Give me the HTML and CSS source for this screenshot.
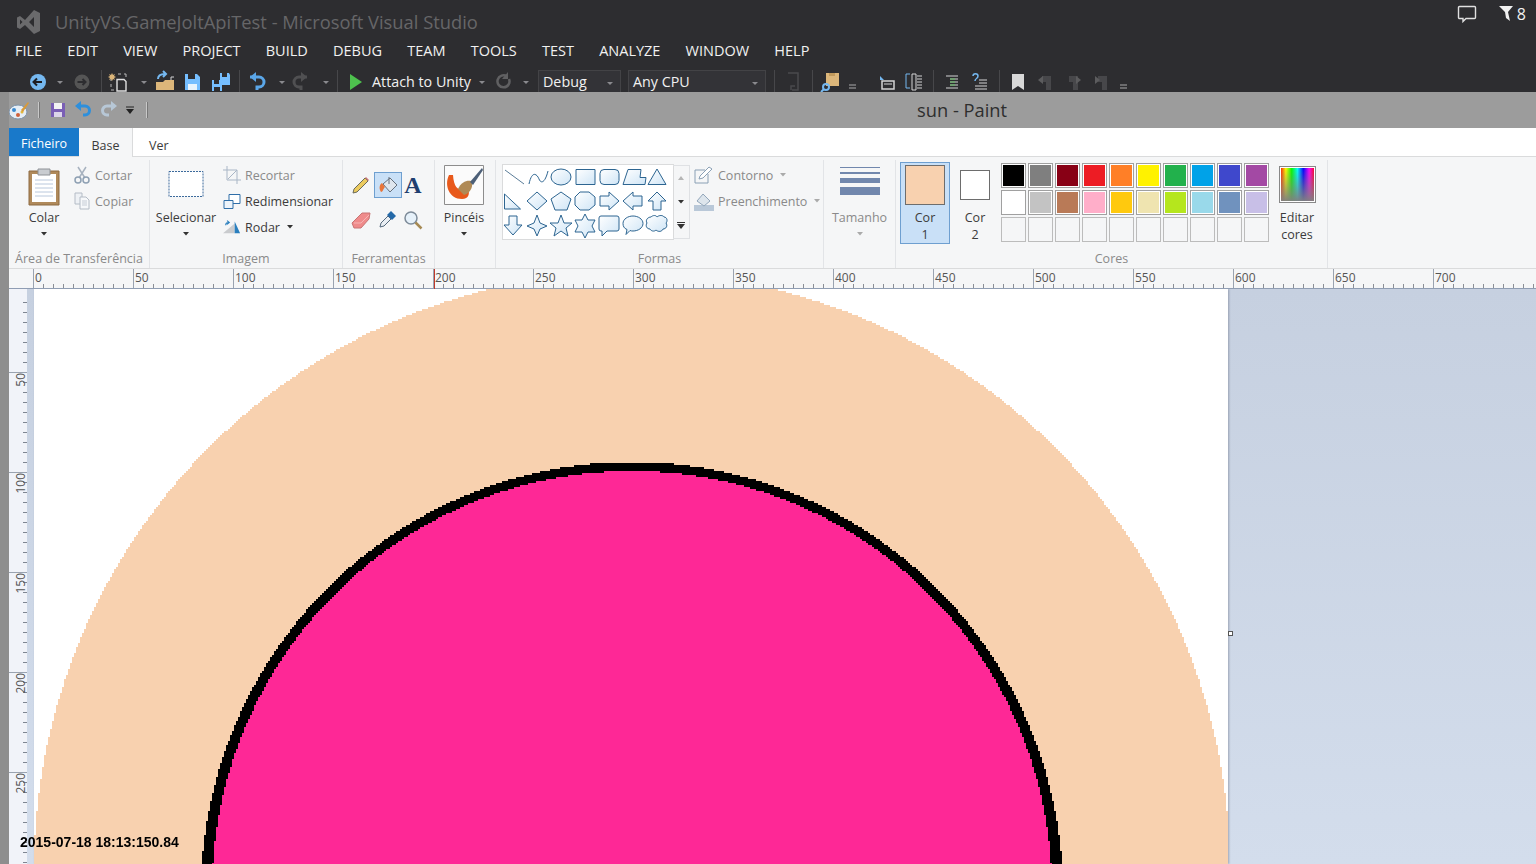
FILE: index.html
```html
<!DOCTYPE html>
<html lang="pt">
<head>
<meta charset="utf-8">
<title>sun - Paint</title>
<link rel="stylesheet" href="styles.css">
</head>
<body>
<svg class="defs" width="0" height="0">
  <symbol id="dn" viewBox="0 0 16 22"><path d="M5 11h6l-3 3z" fill="#8a8a8e"/></symbol>
  <symbol id="dk" viewBox="0 0 8 6"><path d="M1 1h6L4 4.500z" fill="#333"/></symbol>
  <symbol id="lt" viewBox="0 0 8 6"><path d="M1 1h6L4 4.500z" fill="#aaa"/></symbol>
</svg>

<header class="vs">
  <div class="vs-title">
    <svg class="vs-logo" width="26" height="26" viewBox="0 0 26 26"><path d="M19 1l6 3v18l-6 3-9-9-5 4-3-1.500V8.500L5 7l5 4zM5 10.500v5l2.500-2.500zM19 8l-5 5 5 5z" fill="#6a6a6c"/></svg>
    <span class="vs-name">UnityVS.GameJoltApiTest - Microsoft Visual Studio</span>
    <div class="vs-notify">
      <svg width="20" height="18" viewBox="0 0 20 18"><path d="M2.500 1.500h15a1 1 0 0 1 1 1v10a1 1 0 0 1-1 1H9l-3 3v-3H2.500a1 1 0 0 1-1-1v-10a1 1 0 0 1 1-1z" fill="none" stroke="#e0e0e0" stroke-width="1.400"/></svg>
      <svg class="funnel" width="15" height="17" viewBox="0 0 15 17"><path d="M0 1h14L9 7l2 9-4-3-1-6z" fill="#f1f1f1"/></svg>
      <span>8</span>
    </div>
  </div>
  <nav class="vs-menu">
    <span>FILE</span><span>EDIT</span><span>VIEW</span><span>PROJECT</span><span>BUILD</span><span>DEBUG</span><span>TEAM</span><span>TOOLS</span><span>TEST</span><span>ANALYZE</span><span>WINDOW</span><span>HELP</span>
  </nav>
  <div class="vs-tools">
    <svg width="28" height="22" viewBox="0 0 28 22"><circle cx="14" cy="12" r="8" fill="#75b8f0"/><path d="M18 12h-8m3-3.500L9.500 12l3.500 3.500" stroke="#1e1e22" stroke-width="2" fill="none"/></svg>
    <svg width="16" height="22"><use href="#dn"/></svg>
    <svg width="28" height="22" viewBox="0 0 28 22"><circle cx="14" cy="12" r="7.500" fill="#555"/><path d="M9.500 12h8m-3-3 3 3-3 3" stroke="#2d2d30" stroke-width="2" fill="none"/></svg>
    <i class="sep"></i>
    <svg width="26" height="22" viewBox="0 0 26 22"><path d="M6 8h-1v3M5 14v3M5 20h3M12 4h3M18 4h2v3" fill="none" stroke="#b8b8b8"/><path d="M11 9.500h7l2 2V21h-9z" fill="#2d2d30" stroke="#e0e0e0" stroke-width="1.400"/><path d="M6 3l1 2 2-1-1 2 2 1-2 1 1 2-2-1-1 2-1-2-2 1 1-2-2-1 2-1-1-2 2 1z" fill="#dcb67a"/></svg>
    <svg width="20" height="22"><use href="#dn" x="2"/></svg>
    <svg width="26" height="22" viewBox="0 0 26 22"><path d="M4 12h7l2-2h9v10H4z" fill="#dcb67a"/><path d="M19 10V7h3" fill="none" stroke="#d4d4d4"/><path d="M6 9c0-4 3-5 7-5m-2-3 3 3-3 3" stroke="#75b8f0" stroke-width="2" fill="none"/></svg>
    <svg width="28" height="22" viewBox="0 0 28 22"><path d="M7 4h12l3 3v13H7z" fill="#75beff"/><path d="M10 4h7v5h-7z" fill="#2d2d30"/><path d="M10 14h9v6h-9z" fill="#e8f3fc"/></svg>
    <svg width="28" height="22" viewBox="0 0 28 22"><path d="M14 3h9l1 2v10h-10z" fill="#75beff"/><path d="M16 3h5v4h-5z" fill="#2d2d30"/><path d="M6 10h9l1 2v9H6z" fill="#75beff"/><path d="M8 10h5v4H8zM8 17h6v4H8z" fill="#2d2d30"/></svg>
    <i class="sep"></i>
    <svg width="26" height="22" viewBox="0 0 26 22"><path d="M6 7h9a5 5 0 0 1 0 10h-2v3" fill="none" stroke="#5aa6e8" stroke-width="3"/><path d="M12 2v10L6 7z" fill="#5aa6e8"/></svg>
    <svg width="20" height="22"><use href="#dn" x="2"/></svg>
    <svg width="22" height="22" viewBox="0 0 22 22"><path d="M17 7H9a5 5 0 0 0 0 10h2v3" fill="none" stroke="#505052" stroke-width="3"/><path d="M11 2v10l6-5z" fill="#505052"/></svg>
    <svg width="20" height="22"><use href="#dn" x="4"/></svg>
    <i class="sep"></i>
    <svg width="26" height="22" viewBox="0 0 26 22"><path d="M8 4l12 8-12 8z" fill="#4ec24e"/></svg>
    <span class="attach">Attach to Unity</span>
    <svg width="16" height="22"><use href="#dn"/></svg>
    <svg width="28" height="22" viewBox="0 0 28 22"><path d="M19 9a6 6 0 1 1-2-2.500" fill="none" stroke="#606062" stroke-width="2.500"/><path d="M18 2v7h-6z" fill="#606062"/></svg>
    <svg width="16" height="22"><use href="#dn"/></svg>
    <div class="combo combo-debug">Debug<svg width="16" height="22"><use href="#dn"/></svg></div>
    <div class="combo combo-cpu">Any CPU<svg width="16" height="22"><use href="#dn"/></svg></div>
    <i class="sep sep-cpu"></i>
    <svg width="28" height="22" viewBox="0 0 28 22"><path d="M9 3h10v17h-6M12 20v-4h4" fill="none" stroke="#4a4a4c" stroke-width="1.500"/></svg>
    <i class="sep sep-mid"></i>
    <svg width="28" height="22" viewBox="0 0 28 22"><path d="M9 3h13v13H9z" fill="#dcb67a"/><path d="M12 3h6v3h-6z" fill="#c29a5c"/><circle cx="9" cy="17" r="3" fill="none" stroke="#75b8f0" stroke-width="2"/><path d="M7 19l-3 3" stroke="#75b8f0" stroke-width="2"/></svg>
    <svg class="more-gap" width="16" height="22" viewBox="0 0 16 22"><path d="M4 15h7M4 18h7" stroke="#aaa"/></svg>
    <svg width="28" height="22" viewBox="0 0 28 22"><path d="M8 6l4 4H8z" fill="#75b8f0"/><path d="M10 11h12v8H10z" fill="none" stroke="#d4d4d4" stroke-width="1.500"/><path d="M12 14h8" stroke="#d4d4d4"/></svg>
    <svg width="28" height="22" viewBox="0 0 28 22"><path d="M10 4H6v14h4" fill="none" stroke="#75b8f0"/><path d="M12 4h4v16h-4zM17 6h5m-5 3h5m-5 3h5m-5 3h5m-5 3h5" fill="none" stroke="#d4d4d4"/></svg>
    <i class="sep"></i>
    <svg width="28" height="22" viewBox="0 0 28 22"><path d="M8 6h12M12 9h8M12 12h8M12 15h8M8 18h12" stroke="#d4d4d4"/><path d="M12 9h5M12 12h5M12 15h5" stroke="#5cb85c"/></svg>
    <svg width="28" height="22" viewBox="0 0 28 22"><path d="M13 10h8M13 13h8M9 16h12M9 19h12" stroke="#d4d4d4"/><path d="M7 6c0-3 5-3 5 0s-3 2-3 5" fill="none" stroke="#75b8f0" stroke-width="1.500"/></svg>
    <i class="sep"></i>
    <svg width="28" height="22" viewBox="0 0 28 22"><path d="M8 4h12v16l-6-4-6 4z" fill="#d8d8d8"/></svg>
    <svg width="28" height="22" viewBox="0 0 28 22"><path d="M10 6h9v14h-5V12l-4 0z" fill="#47474a"/><path d="M6 10l5-4v8z" fill="#5c5c5e"/></svg>
    <svg width="28" height="22" viewBox="0 0 28 22"><path d="M9 6h9v14h-5V12H9z" fill="#47474a"/><path d="M21 10l-5-4v8z" fill="#5c5c5e"/></svg>
    <svg width="28" height="22" viewBox="0 0 28 22"><path d="M10 6h9v14h-5V12h-4z" fill="#47474a"/><path d="M7 6l5 4-5 4z" fill="#5c5c5e"/></svg>
    <svg width="16" height="22" viewBox="0 0 16 22"><path d="M4 15h7M4 18h7" stroke="#aaa"/></svg>
  </div>
</header>

<main class="paint">
  <div class="qat">
    <svg width="22" height="22" viewBox="0 0 22 22"><ellipse cx="10" cy="13" rx="9" ry="7" fill="#e5edf5" stroke="#7d93aa"/><circle cx="6" cy="11" r="2" fill="#3a8ad0"/><circle cx="10" cy="16" r="2" fill="#d0603a"/><circle cx="14" cy="13" r="1.500" fill="#e3b93c"/><path d="M13 11l7-8 1 1-6 9z" fill="#d89a3a"/></svg>
    <i class="qat-sep"></i>
    <svg class="qat-save" width="18" height="18" viewBox="0 0 18 18"><path d="M2 2h14v14H2z" fill="#7a5fb5"/><path d="M5 2h8v6H5z" fill="#f3f3f3"/><path d="M5 11h8v5H5z" fill="#dcd6ea"/></svg>
    <svg class="qat-undo" width="20" height="18" viewBox="0 0 20 18"><path d="M4 5h8a4.500 4.500 0 0 1 0 9h-2" fill="none" stroke="#2d8fdc" stroke-width="3"/><path d="M8 0v10L2 5z" fill="#2d8fdc"/></svg>
    <svg class="qat-redo" width="20" height="18" viewBox="0 0 20 18"><path d="M16 5H8a4.500 4.500 0 0 0 0 9h2" fill="none" stroke="#b7c7d6" stroke-width="3"/><path d="M12 0v10l6-5z" fill="#b7c7d6"/></svg>
    <svg class="qat-more" width="8" height="9" viewBox="0 0 8 9"><path d="M0 1h8" stroke="#222"/><path d="M0 3h8L4 8z" fill="#222"/></svg>
    <i class="qat-sep qat-sep-end"></i>
    <span class="doc-title">sun - Paint</span>
  </div>

  <div class="tabs">
    <span class="tab tab-file">Ficheiro</span>
    <span class="tab tab-on">Base</span>
    <span class="tab">Ver</span>
  </div>

  <div class="ribbon">
    <section class="group g-clip">
      <div class="g-body">
        <div class="big big-colar">
          <svg width="34" height="40" viewBox="0 0 34 40"><path d="M2 5h30v34H2z" fill="#b08a5b" stroke="#8d6b42"/><path d="M5 8h24v28H5z" fill="#fff"/><path d="M8 14h18M8 18h18M8 22h18M8 26h18M8 30h18" stroke="#b9c8dc"/><path d="M11 3h12v6H11z" fill="#c9ccd0" stroke="#8e9297"/></svg>
          <span>Colar</span>
          <svg class="caret" width="8" height="6"><use href="#dk"/></svg>
        </div>
        <div class="rows rows-clip">
          <div class="row off">
            <svg width="16" height="18" viewBox="0 0 16 18"><path d="M4 1l7 11M12 1L5 12" stroke="#a7b2bf" stroke-width="1.500"/><circle cx="4" cy="14" r="3" fill="none" stroke="#8ea0b3" stroke-width="1.500"/><circle cx="12" cy="14" r="3" fill="none" stroke="#8ea0b3" stroke-width="1.500"/></svg>
            <span>Cortar</span>
          </div>
          <div class="row off">
            <svg width="16" height="18" viewBox="0 0 16 18"><path d="M1 1h7v11H1z" fill="#eef1f5" stroke="#b4bcc6"/><path d="M6 5h6l3 3v9H6z" fill="#f6f8fa" stroke="#b4bcc6"/><path d="M8 9h5M8 11h5M8 13h5" stroke="#c6cdd6"/></svg>
            <span>Copiar</span>
          </div>
        </div>
      </div>
      <div class="g-label">Área de Transferência</div>
    </section>

    <section class="group g-image">
      <div class="g-body">
        <div class="big big-sel">
          <svg width="36" height="28" viewBox="0 0 36 28"><path d="M1 1.500h34v25H1z" fill="#fff" stroke="#3c6a9c" stroke-dasharray="2 1"/></svg>
          <span>Selecionar</span>
          <svg class="caret" width="8" height="6"><use href="#dk"/></svg>
        </div>
        <div class="rows rows-img">
          <div class="row off">
            <svg width="18" height="18" viewBox="0 0 18 18"><path d="M4 0v14h14M0 4h14v14" fill="none" stroke="#a9b6c6"/><path d="M5 13L14 4" stroke="#a9b6c6"/></svg>
            <span>Recortar</span>
          </div>
          <div class="row">
            <svg width="18" height="18" viewBox="0 0 18 18"><path d="M6 2.500h11v9H6z" fill="#fff" stroke="#2f6ea8"/><path d="M1 8.500h9v8H1z" fill="#eef4fa" stroke="#2f6ea8"/></svg>
            <span>Redimensionar</span>
          </div>
          <div class="row">
            <svg width="18" height="18" viewBox="0 0 20 18"><path d="M0 16L13 5v11z" fill="#c9cbce"/><path d="M13 3l6 13h-6z" fill="#2a7fbe"/><path d="M3 7c0-2 1-3 3-3m-1.500-2L7 4 4.500 6" fill="none" stroke="#2a7fbe" stroke-width="1.200"/></svg>
            <span>Rodar</span>
            <svg class="row-caret" width="8" height="6"><use href="#dk"/></svg>
          </div>
        </div>
      </div>
      <div class="g-label">Imagem</div>
    </section>

    <section class="group g-tools">
      <div class="g-body">
        <div class="tool-grid">
          <div class="tool"><svg width="20" height="20" viewBox="0 0 20 20"><path d="M3 14L14 3l3 3L6 17l-4 1z" fill="#eccb5f" stroke="#6b6b5b"/><path d="M14 3l1-1 3 3-1 1z" fill="#c77"/></svg></div>
          <div class="tool tool-on"><svg width="20" height="20" viewBox="0 0 20 20"><path d="M5 9l7-6 7 7-7 7z" fill="#dfe6ee" stroke="#66707c"/><path d="M11 2v7" stroke="#66707c"/><path d="M4 8c-3 2-3 6-1 9 2 0 2-3 4-5z" fill="#e8753a"/></svg></div>
          <div class="tool"><span class="tool-a">A</span></div>
          <div class="tool"><svg width="20" height="18" viewBox="0 0 20 18"><path d="M1 12L11 2h8l-1 6-8 9H3z" fill="#ef8b8b" stroke="#c87474"/><path d="M3 12h7l8-8" fill="none" stroke="#f6b5b5"/></svg></div>
          <div class="tool"><svg width="20" height="20" viewBox="0 0 20 20"><path d="M3 17l1-4 7-7 3 3-7 7z" fill="#e9eef3" stroke="#54687c"/><path d="M10 5l4-4 5 5-4 4z" fill="#2469a8"/></svg></div>
          <div class="tool"><svg width="20" height="20" viewBox="0 0 20 20"><circle cx="8" cy="8" r="6" fill="#e6f1fa" stroke="#7d8b99" stroke-width="1.500"/><path d="M12.500 12.500l6 6" stroke="#a68a54" stroke-width="2.500"/></svg></div>
        </div>
      </div>
      <div class="g-label">Ferramentas</div>
    </section>

    <section class="group g-brush">
      <div class="g-body">
        <div class="big big-brush">
          <svg width="40" height="40" viewBox="0 0 40 40"><path d="M.5.500h39v39H.5z" fill="#fbfbfb" stroke="#8d8d8d"/><path d="M5 10c-5 10 0 24 13 24 7 0 8-6 6-10-7 2-14 2-15-14z" fill="#e8591b"/><path d="M20 30l-6-6c3-7 9-9 13-8 3 4 0 12-7 14z" fill="#b08a55"/><path d="M26 17l12-14 1 2-10 15z" fill="#4d6078"/></svg>
          <span>Pincéis</span>
          <svg class="caret" width="8" height="6"><use href="#dk"/></svg>
        </div>
      </div>
    </section>

    <section class="group g-shapes">
      <div class="g-body">
        <div class="gallery">
          <svg class="shapes" width="170" height="74" viewBox="2 0 170 74">
            <defs><linearGradient id="sf" x1="0" y1="0" x2="1" y2="1"><stop offset="0" stop-color="#fff"/><stop offset="1" stop-color="#cfe5f6"/></linearGradient></defs>
            <g fill="url(#sf)" stroke="#2d6591" stroke-width="1">
              <path d="M4 5l19 14" fill="none" stroke="#5a7c98"/>
              <path d="M28 19c3-14 8-10 10-5s6 4 9-8" fill="none"/>
              <ellipse cx="60" cy="12" rx="10" ry="8"/>
              <path d="M75 4.500h19v15H75z"/>
              <rect x="99" y="4.500" width="19" height="15" rx="4"/>
              <path d="M127 4.500h13l-1 8h6l-1 7h-22z"/>
              <path d="M156 4l9 15.500h-18z"/>
              <path d="M3.500 29v15h16z"/>
              <path d="M36 27l10 9-10 9-10-9z"/>
              <path d="M60 27l10 7-4 11H54l-4-11z"/>
              <path d="M79 27h9l6 5v8l-6 5h-9l-5-5v-8z"/>
              <path d="M99 31h9v-4l10 9-10 9v-4h-9z"/>
              <path d="M142 31h-9v-4l-10 9 10 9v-4h9z" transform="translate(-1 0)"/>
              <path d="M156 27l9 9h-5v9h-8v-9h-5z"/>
              <path d="M8 51h8v9h5l-9 10-9-10h5z"/>
              <path d="M36 50l3 8 7 3-7 3-3 7-3-7-7-3 7-3z"/>
              <path d="M60 50l3 8h8l-6 5 2 8-7-5-7 5 2-8-6-5h8z"/>
              <path d="M84 49l3 6h7l-3 6 3 6h-7l-3 6-3-6h-7l3-6-3-6h7z"/>
              <path d="M100 51h16a2 2 0 0 1 2 2v11a2 2 0 0 1-2 2h-10l-5 5v-5h-1a2 2 0 0 1-2-2V53a2 2 0 0 1 2-2z"/>
              <path d="M132 51c5 0 10 3 10 7.500s-5 7.500-10 7.500c-1 0-2 0-3-.500l-4 4 1-5c-3-1-4-3.500-4-6 0-4.500 5-7.500 10-7.500z"/>
              <path d="M150 52c2-2 5-2 6 0 2-2 6-2 7 0 3 0 4 4 2 6 2 3 0 6-3 6-1 3-5 3-7 1-2 2-5 1-6-1-3 0-5-3-3-6-2-3 1-6 4-6z"/>
            </g>
          </svg>
          <div class="gal-btns">
            <div class="gal-btn"><svg width="8" height="6" viewBox="0 0 8 6"><path d="M1 5h6L4 1z" fill="#b5b5b5"/></svg></div>
            <div class="gal-btn"><svg width="8" height="6"><use href="#dk"/></svg></div>
            <div class="gal-btn"><svg width="8" height="8" viewBox="0 0 8 8"><path d="M0 .500h8" stroke="#333"/><path d="M0 2h8L4 7z" fill="#333"/></svg></div>
          </div>
        </div>
        <div class="rows rows-shape">
          <div class="row off">
            <svg width="20" height="18" viewBox="0 0 20 18"><path d="M1 4h10M1 4v13h13V8" fill="none" stroke="#8aa0b5"/><path d="M5 13l1-3 9-9 3 2-9 9z" fill="#fff" stroke="#8aa0b5"/></svg>
            <span>Contorno</span>
            <svg class="row-caret" width="8" height="6"><use href="#lt"/></svg>
          </div>
          <div class="row off">
            <svg width="20" height="20" viewBox="0 0 20 20"><path d="M0 14h20v6H0z" fill="#b9c8d8"/><path d="M3 10l6-7 7 7-6 5z" fill="#dde5ec" stroke="#92a6ba"/></svg>
            <span>Preenchimento</span>
            <svg class="row-caret" width="8" height="6"><use href="#lt"/></svg>
          </div>
        </div>
      </div>
      <div class="g-label">Formas</div>
    </section>

    <section class="group g-size">
      <div class="g-body">
        <div class="big big-size">
          <div class="size-lines"><i class="l1"></i><i class="l2"></i><i class="l3"></i><i class="l4"></i></div>
          <span>Tamanho</span>
          <svg class="caret" width="8" height="6"><use href="#lt"/></svg>
        </div>
      </div>
    </section>

    <section class="group g-colors">
      <div class="g-body">
        <div class="cur cur-on"><b class="swatch s1"></b><span>Cor<br>1</span></div>
        <div class="cur"><b class="swatch s2"></b><span>Cor<br>2</span></div>
        <div class="palette">
          <i class="c c1"></i><i class="c c2"></i><i class="c c3"></i><i class="c c4"></i><i class="c c5"></i><i class="c c6"></i><i class="c c7"></i><i class="c c8"></i><i class="c c9"></i><i class="c c10"></i>
          <i class="c c11"></i><i class="c c12"></i><i class="c c13"></i><i class="c c14"></i><i class="c c15"></i><i class="c c16"></i><i class="c c17"></i><i class="c c18"></i><i class="c c19"></i><i class="c c20"></i>
          <i class="c e"></i><i class="c e"></i><i class="c e"></i><i class="c e"></i><i class="c e"></i><i class="c e"></i><i class="c e"></i><i class="c e"></i><i class="c e"></i><i class="c e"></i>
        </div>
        <div class="edit"><b class="rainbow"></b><span>Editar<br>cores</span></div>
      </div>
      <div class="g-label">Cores</div>
    </section>
  </div>

  <div class="hruler">
    <span>0</span><span>50</span><span>100</span><span>150</span><span>200</span><span>250</span><span>300</span><span>350</span><span>400</span><span>450</span><span>500</span><span>550</span><span>600</span><span>650</span><span>700</span>
    <i class="mark"></i>
  </div>

  <div class="work">
    <div class="vruler">
      <span class="v-first"></span><span><em>50</em></span><span><em>100</em></span><span><em>150</em></span><span><em>200</em></span><span><em>250</em></span>
    </div>
    <div class="space">
      <div class="sheet">
        <canvas id="sun" width="597" height="288"></canvas>
      </div>
      <i class="handle"></i>
    </div>
  </div>
</main>

<div class="stamp">2015-07-18 18:13:150.84</div>
<script src="sheet.js"></script>
</body>
</html>
```

FILE: styles.css
```css
html, body
{
	margin: 0;
	padding: 0;
	height: 100%;
	overflow: hidden;
}
body
{
	position: relative;
	display: flex;
	flex-direction: column;
	height: 864px;
	font-family: "Open Sans", "Noto Sans", sans-serif;
	background: #2d2d30;
}
svg { display: block; flex: none; }
.defs { position: absolute; }

/* visual studio behind */
.vs
{
	height: 92px;
	flex: none;
	overflow: hidden;
	background: #2d2d30;
	color: #f1f1f1;
}
.vs-title
{
	display: flex;
	align-items: center;
	height: 41px;
	padding: 3px 0 0 15px;
	box-sizing: border-box;
}
.vs-logo { margin-top: -1px; }
.vs-name
{
	margin: -2px 0 0 14px;
	font-size: 18.35px;
	color: #666668;
}
.vs-notify
{
	display: flex;
	align-items: center;
	margin-left: auto;
	margin-top: -17px;
	padding-right: 10px;
	font-size: 16px;
}
.funnel { margin-left: 22px; }
.vs-notify span { margin-left: 3px; }
.vs-menu
{
	display: flex;
	gap: 25.2px;
	height: 20px;
	padding-left: 15px;
	font-size: 14.5px;
	line-height: 20px;
}
.vs-tools
{
	display: flex;
	align-items: flex-start;
	height: 22px;
	margin-top: 9px;
	padding-left: 24px;
	font-size: 14.3px;
}
.sep
{
	flex: none;
	width: 1px;
	height: 22px;
	margin: 0 4px 0 5px;
	background: #47474a;
}
.sep-cpu { margin: 0 4px 0 8px; }
.sep-mid { margin: 0 4px 0 5px; }
.more-gap { margin-right: 11px; }
.attach
{
	margin-left: 4px;
	width: 102px;
	line-height: 24px;
	white-space: nowrap;
}
.combo
{
	display: flex;
	justify-content: space-between;
	box-sizing: border-box;
	height: 24px;
	padding: 0 2px 0 4px;
	border: 1px solid #434346;
	background: #333337;
	line-height: 22px;
}
.combo-debug { width: 83px; margin-left: 4px; }
.combo-cpu { width: 138px; margin-left: 7px; }

/* paint window */
.paint
{
	flex: 1;
	display: flex;
	flex-direction: column;
	min-height: 0;
	border-left: 9px solid #8e8e8e;
	background: #f5f6f7;
	overflow: hidden;
}
.qat
{
	display: flex;
	align-items: center;
	flex: none;
	height: 36px;
	margin-left: -9px;
	padding-left: 8px;
	background: #9c9c9c;
}
.qat-sep
{
	width: 1px;
	height: 16px;
	margin-left: 8px;
	background: #c8c8c8;
	border-right: 1px solid #777;
}
.qat-save { margin-left: 9px; }
.qat-undo { margin-left: 6px; }
.qat-redo { margin-left: 6px; }
.qat-more { margin-left: 7px; }
.qat-sep-end { margin-left: 12px; }
.doc-title
{
	margin: -2px 0 0 769px;
	font-size: 18.3px;
	color: #2e2e2e;
}
.tabs
{
	display: flex;
	flex: none;
	height: 29px;
	background: #fff;
	box-sizing: border-box;
	border-bottom: 1px solid #dadbdc;
	font-size: 12.5px;
	color: #3b3b3b;
}
.tab
{
	display: block;
	padding: 0 16px;
	line-height: 35px;
}
.tab-file
{
	width: 70px;
	height: 28px;
	box-sizing: border-box;
	padding: 0;
	background: #1979ca;
	color: #fff;
	text-align: center;
	line-height: 31px;
}
.tab-on
{
	width: 54px;
	height: 29px;
	box-sizing: border-box;
	padding: 0;
	text-align: center;
	background: #f5f6f7;
	border-right: 1px solid #dadbdc;
}

/* ribbon */
.ribbon
{
	display: flex;
	flex: none;
	height: 112px;
	font-size: 12.5px;
	color: #3b3b3b;
	background: #f5f6f7;
	box-sizing: border-box;
	border-bottom: 1px solid #dadbdc;
}
.group
{
	position: relative;
	display: flex;
	flex-direction: column;
	box-sizing: border-box;
	height: 108px;
	margin-top: 3px;
	border-right: 1px solid #e2e4e7;
}
.g-body { display: flex; flex: 1; min-height: 0; }
.g-label
{
	height: 16px;
	margin-bottom: 1px;
	text-align: center;
	line-height: 16px;
	color: #8a8a8a;
	white-space: nowrap;
}
.g-clip { width: 141px; }
.g-image { width: 193px; }
.g-tools { width: 92px; }
.g-brush { width: 61px; }
.g-shapes { width: 328px; padding-right: 0; margin-right: 2px; }
.g-size { width: 70px; }
.g-colors { width: 432px; margin-right: 2px; }
.big
{
	display: flex;
	flex-direction: column;
	align-items: center;
	line-height: 17px;
}
.big svg:first-child { margin-top: 6px; }
.big span { position: absolute; top: 49px; white-space: nowrap; }
.big .caret { position: absolute; top: 71px; }
.big-colar { width: 70px; margin-left: 0; }
.big-colar svg:first-child { margin-top: 6px; }
.big-sel { width: 70px; margin-left: 1px; }
.big-sel svg:first-child { margin-top: 10px; }
.big-brush { width: 58px; }
.big-brush svg:first-child { margin-top: 5px; }
.big-size { width: 67px; color: #8a8a8a; }
.big-colar, .big-sel, .big-brush, .big-size { position: relative; }
.rows { display: flex; flex-direction: column; margin-top: 2px; }
.rows-clip { margin-left: -5px; }
.rows-img { margin-left: 2px; }
.rows-shape { margin-left: 4px; }
.row
{
	display: flex;
	align-items: center;
	height: 26px;
	white-space: nowrap;
}
.row svg:first-child { margin-right: 4px; }
.row-caret { margin-left: 6px; }
.off { color: #8a8a8a; }
.rows-clip svg:first-child { margin-right: 5px; }

.tool-grid
{
	display: grid;
	grid-template-columns: repeat(3, 26px);
	grid-auto-rows: 35px;
	margin: 8px 0 0 5px;
}
.tool
{
	display: flex;
	align-items: center;
	justify-content: center;
	width: 26px;
	height: 26px;
	box-sizing: border-box;
	margin-top: 4px;
}
.tool-on
{
	width: 28px;
	background: #c9e0f7;
	border: 1px solid #6e9fd0;
}
.tool-a
{
	font-family: "Liberation Serif", serif;
	font-weight: bold;
	font-size: 24px;
	color: #1f3f70;
}

.gallery
{
	display: flex;
	height: 74px;
	margin: 5px 0 0 7px;
	flex: none;
}
.shapes
{
	background: #fff;
	outline: 1px solid #dadbdc;
}
.gal-btns
{
	display: flex;
	flex-direction: column;
	width: 17px;
	box-sizing: border-box;
	border: 1px solid #dfe1e4;
	border-left: 0;
}
.gal-btn
{
	flex: 1;
	display: flex;
	align-items: center;
	justify-content: center;
}

.size-lines
{
	display: flex;
	flex-direction: column;
	width: 40px;
	margin-top: 7px;
}
.size-lines i { display: block; background: #7187ad; }
.l1 { height: 1px; }
.l2 { height: 2px; margin-top: 4px; }
.l3 { height: 5px; margin-top: 4px; }
.l4 { height: 8px; margin-top: 4px; }

.cur
{
	display: flex;
	flex-direction: column;
	align-items: center;
	box-sizing: border-box;
	width: 50px;
	height: 82px;
	margin: 2px 0 0 4px;
	line-height: 17px;
	text-align: center;
}
.cur span { position: absolute; top: 49px; }
.cur-on
{
	background: #c9e0f7;
	border: 1px solid #6e9fd0;
}
.swatch { display: block; box-sizing: border-box; border: 1px solid #6d6d6d; }
.s1 { width: 40px; height: 40px; margin-top: 2px; background: #f8d1af; }
.s2 { width: 30px; height: 30px; margin-top: 8px; background: #fff; }
.cur + .cur { margin-left: 0; width: 50px; }
.palette
{
	display: grid;
	grid-template-columns: repeat(10, 25px);
	grid-auto-rows: 25px;
	gap: 2px;
	margin: 3px 0 0 1px;
	align-content: start;
}
.c
{
	display: block;
	box-sizing: border-box;
	border: 1px solid #a0a0a0;
	box-shadow: inset 0 0 0 1px #fff;
}
.e { box-shadow: none; border-color: #bcbcbc; background: #f5f6f7; }
.c1 { background: #000; }
.c2 { background: #7f7f7f; }
.c3 { background: #880015; }
.c4 { background: #ed1c24; }
.c5 { background: #ff7f27; }
.c6 { background: #fff200; }
.c7 { background: #22b14c; }
.c8 { background: #00a2e8; }
.c9 { background: #3f48cc; }
.c10 { background: #a349a4; }
.c11 { background: #fff; }
.c12 { background: #c3c3c3; }
.c13 { background: #b97a57; }
.c14 { background: #ffaec9; }
.c15 { background: #ffc90e; }
.c16 { background: #efe4b0; }
.c17 { background: #b5e61d; }
.c18 { background: #99d9ea; }
.c19 { background: #7092be; }
.c20 { background: #c8bfe7; }
.edit
{
	display: flex;
	flex-direction: column;
	align-items: center;
	width: 50px;
	margin-left: 3px;
	line-height: 17px;
	text-align: center;
}
.edit span { position: absolute; top: 49px; }
.rainbow
{
	display: block;
	box-sizing: border-box;
	width: 37px;
	height: 37px;
	margin-top: 6px;
	border: 1px solid #888;
	box-shadow: inset 0 0 0 1px #fff;
	background: linear-gradient(to bottom, transparent, #808080), linear-gradient(to right, #f00, #ff0, #0f0, #0ff, #00f, #f0f, #f00);
}

/* rulers */
.hruler
{
	position: relative;
	display: flex;
	flex: none;
	height: 20px;
	padding-left: 24px;
	box-sizing: border-box;
	background-color: #f5f6f7;
	background-image: repeating-linear-gradient(to right, #8b8f96 0, #8b8f96 1px, transparent 1px, transparent 10px);
	background-size: 100% 4px;
	background-position: 24px bottom;
	background-repeat: no-repeat;
	border-bottom: 1px solid #8f9db3;
	font-size: 12px;
	color: #555;
}
.hruler span
{
	flex: none;
	width: 100px;
	box-sizing: border-box;
	padding-left: 1px;
	border-left: 1px solid #9aa3b0;
	line-height: 18px;
}
.mark
{
	position: absolute;
	left: 425px;
	top: 0;
	width: 1px;
	height: 20px;
	background: #c0392b;
}
.work { display: flex; flex: 1; min-height: 0; }
.vruler
{
	display: flex;
	flex-direction: column;
	flex: none;
	width: 18px;
	background-color: #f1f3f9;
	background-image: repeating-linear-gradient(to bottom, #7f8692 0, #7f8692 1px, transparent 1px, transparent 10px);
	background-size: 4px 100%;
	background-position: right 13px;
	background-repeat: no-repeat;
	font-size: 12px;
	color: #555;
}
.vruler span
{
	flex: none;
	height: 100px;
	box-sizing: border-box;
	border-top: 1px solid #9aa3b0;
}
.vruler .v-first { height: 83px; border-top: 0; }
.vruler em
{
	display: block;
	font-style: normal;
	writing-mode: vertical-rl;
	transform: rotate(180deg);
	line-height: 18px;
	margin-top: 0;
	padding-right: 3px;
}
.space
{
	position: relative;
	flex: 1;
	padding-left: 7px;
	background: linear-gradient(to bottom, #c6d0e0, #d3ddec);
	overflow: hidden;
}
.sheet
{
	width: 1194px;
	height: 100%;
	background: #fff;
	overflow: hidden;
	box-shadow: 1px 0 2px rgba(90, 100, 120, .45);
}
#sun
{
	display: block;
	width: 1194px;
	height: 576px;
	image-rendering: pixelated;
}
.handle
{
	position: absolute;
	left: 1201px;
	top: 342px;
	width: 3px;
	height: 3px;
	background: #fff;
	border: 1px solid #555;
}
.stamp
{
	position: absolute;
	left: 20px;
	top: 834px;
	font-family: "Liberation Sans", sans-serif;
	font-weight: bold;
	font-size: 14px;
	line-height: 16px;
	color: #000;
}
```

FILE: sheet.js
```js
// the drawing is zoomed to 200%, so paint hard edged rows at half size
var ctx = document.getElementById("sun").getContext("2d");

function disc(cx, cy, r, color) {
	ctx.fillStyle = color;
	for (var y = 0; y < 288; y++) {
		var dy = y + 0.5 - cy;
		if (Math.abs(dy) >= r) continue;
		var half = Math.sqrt(r * r - dy * dy);
		var left = Math.round(cx - half);
		ctx.fillRect(left, y, Math.round(cx + half) - left, 1);
	}
}

disc(299, 290.5, 299, "#f8d1af");
disc(299, 302, 215.5, "#000");
disc(299, 301, 210, "#fe2896");
```
